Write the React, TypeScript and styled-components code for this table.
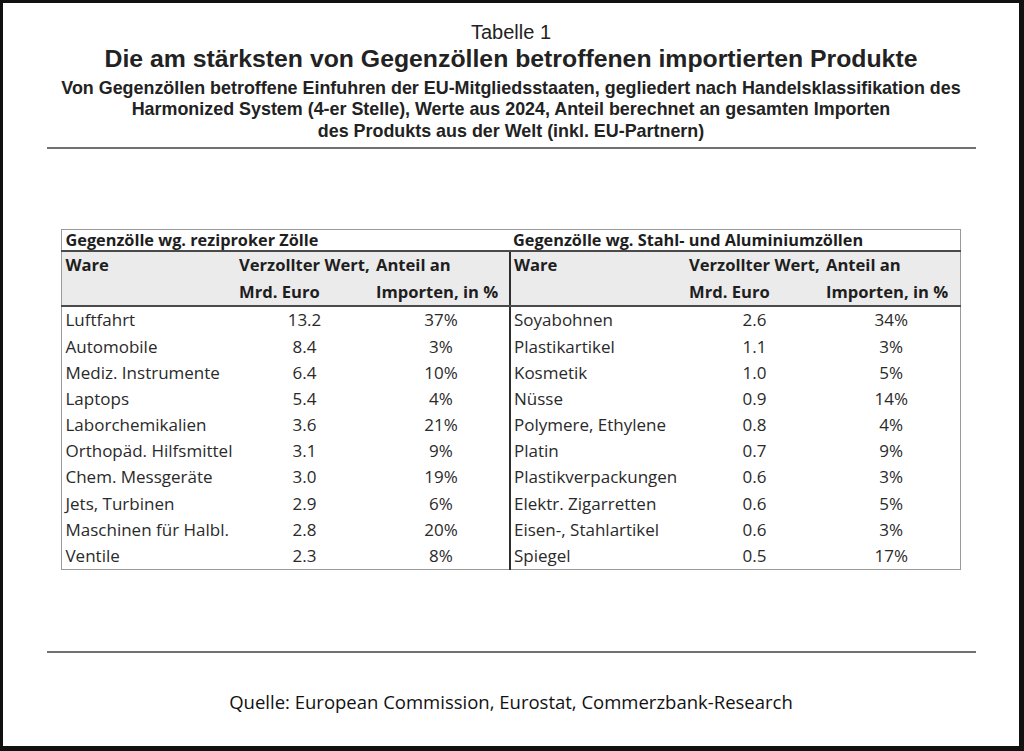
import React from "react";
import styled, { createGlobalStyle } from "styled-components";

const Global = createGlobalStyle`
  html, body { margin: 0; padding: 0; background: #fff; }
  body { width: 1024px; height: 751px; overflow: hidden; }
`;

const Frame = styled.div`
  box-sizing: border-box;
  width: 1024px;
  height: 751px;
  border-style: solid;
  border-color: #111;
  border-width: 3px 5px 5px 3px;
  display: flex;
  flex-direction: column;
  align-items: center;
  font-family: "Liberation Sans", Arial, sans-serif;
  color: #222;
`;

const Caption = styled.div`
  margin-top: 18px;
  font-size: 20px;
  line-height: 22px;
  text-align: center;
`;

const Title = styled.h1`
  margin: 4px 0 0;
  font-size: 24.8px;
  line-height: 24px;
  font-weight: 700;
  text-align: center;
`;

const Subtitle = styled.p`
  margin: 7px 0 0;
  font-size: 17.9px;
  line-height: 21.4px;
  font-weight: 700;
  text-align: center;
`;

const Rule = styled.hr<{ $top: number }>`
  box-sizing: border-box;
  width: 929px;
  height: 2px;
  margin: ${(p) => p.$top}px 0 0;
  border: none;
  background: #707070;
`;

const Table = styled.table`
  margin-top: 80px;
  width: 898px;
  table-layout: fixed;
  border-collapse: collapse;
  border: 1px solid #9a9a9a;
  font-family: "Open Sans", "Noto Sans", sans-serif;
  font-size: 17px;
  color: #2a2a2a;
`;

const SectionCell = styled.th`
  height: 20px;
  padding: 0 3px;
  font-size: 16.3px;
  line-height: 20px;
  text-align: left;
  font-weight: 700;
  color: #1e1e1e;
  white-space: nowrap;
  border-bottom: 2px solid #4a4a4a;
`;

const HeadCell = styled.th<{ $divider?: boolean }>`
  padding: 0 3px;
  background: #ebebeb;
  font-size: 16.6px;
  line-height: 26.5px;
  text-align: left;
  vertical-align: top;
  font-weight: 700;
  color: #1e1e1e;
  white-space: nowrap;
  border-bottom: 2px solid #4a4a4a;
  border-left: ${(p) => (p.$divider ? "2px solid #2e2e2e" : "none")};
`;

const DataCell = styled.td<{ $center?: boolean; $divider?: boolean }>`
  height: 26.2px;
  padding: 0 3px;
  line-height: 26px;
  text-align: ${(p) => (p.$center ? "center" : "left")};
  white-space: nowrap;
  border-left: ${(p) => (p.$divider ? "2px solid #2e2e2e" : "none")};
`;

const Source = styled.div`
  margin-top: 38px;
  font-family: "Open Sans", "Noto Sans", sans-serif;
  font-size: 18.5px;
  line-height: 22px;
  color: #111;
  text-align: center;
`;

type Row = [string, string, string];

const left: Row[] = [
  ["Luftfahrt", "13.2", "37%"],
  ["Automobile", "8.4", "3%"],
  ["Mediz. Instrumente", "6.4", "10%"],
  ["Laptops", "5.4", "4%"],
  ["Laborchemikalien", "3.6", "21%"],
  ["Orthopäd. Hilfsmittel", "3.1", "9%"],
  ["Chem. Messgeräte", "3.0", "19%"],
  ["Jets, Turbinen", "2.9", "6%"],
  ["Maschinen für Halbl.", "2.8", "20%"],
  ["Ventile", "2.3", "8%"],
];

const right: Row[] = [
  ["Soyabohnen", "2.6", "34%"],
  ["Plastikartikel", "1.1", "3%"],
  ["Kosmetik", "1.0", "5%"],
  ["Nüsse", "0.9", "14%"],
  ["Polymere, Ethylene", "0.8", "4%"],
  ["Platin", "0.7", "9%"],
  ["Plastikverpackungen", "0.6", "3%"],
  ["Elektr. Zigarretten", "0.6", "5%"],
  ["Eisen-, Stahlartikel", "0.6", "3%"],
  ["Spiegel", "0.5", "17%"],
];

export default function App() {
  return (
    <>
      <Global />
      <Frame>
        <Caption>Tabelle 1</Caption>
        <Title>Die am stärksten von Gegenzöllen betroffenen importierten Produkte</Title>
        <Subtitle>
          Von Gegenzöllen betroffene Einfuhren der EU-Mitgliedsstaaten, gegliedert nach Handelsklassifikation des
          <br />
          Harmonized System (4-er Stelle), Werte aus 2024, Anteil berechnet an gesamten Importen
          <br />
          des Produkts aus der Welt (inkl. EU-Partnern)
        </Subtitle>
        <Rule $top={5} />
        <Table>
          <colgroup>
            <col style={{ width: 174 }} />
            <col style={{ width: 137 }} />
            <col style={{ width: 137 }} />
            <col style={{ width: 176 }} />
            <col style={{ width: 137 }} />
            <col style={{ width: 137 }} />
          </colgroup>
          <thead>
            <tr>
              <SectionCell colSpan={3}>Gegenzölle wg. reziproker Zölle</SectionCell>
              <SectionCell colSpan={3}>Gegenzölle wg. Stahl- und Aluminiumzöllen</SectionCell>
            </tr>
            <tr>
              <HeadCell>Ware</HeadCell>
              <HeadCell>
                Verzollter Wert,
                <br />
                Mrd. Euro
              </HeadCell>
              <HeadCell>
                Anteil an
                <br />
                Importen, in %
              </HeadCell>
              <HeadCell $divider>Ware</HeadCell>
              <HeadCell>
                Verzollter Wert,
                <br />
                Mrd. Euro
              </HeadCell>
              <HeadCell>
                Anteil an
                <br />
                Importen, in %
              </HeadCell>
            </tr>
          </thead>
          <tbody>
            {left.map((l, i) => {
              const r = right[i];
              return (
                <tr key={l[0]}>
                  <DataCell>{l[0]}</DataCell>
                  <DataCell $center>{l[1]}</DataCell>
                  <DataCell $center>{l[2]}</DataCell>
                  <DataCell $divider>{r[0]}</DataCell>
                  <DataCell $center>{r[1]}</DataCell>
                  <DataCell $center>{r[2]}</DataCell>
                </tr>
              );
            })}
          </tbody>
        </Table>
        <Rule $top={81} />
        <Source>Quelle: European Commission, Eurostat, Commerzbank-Research</Source>
      </Frame>
    </>
  );
}
